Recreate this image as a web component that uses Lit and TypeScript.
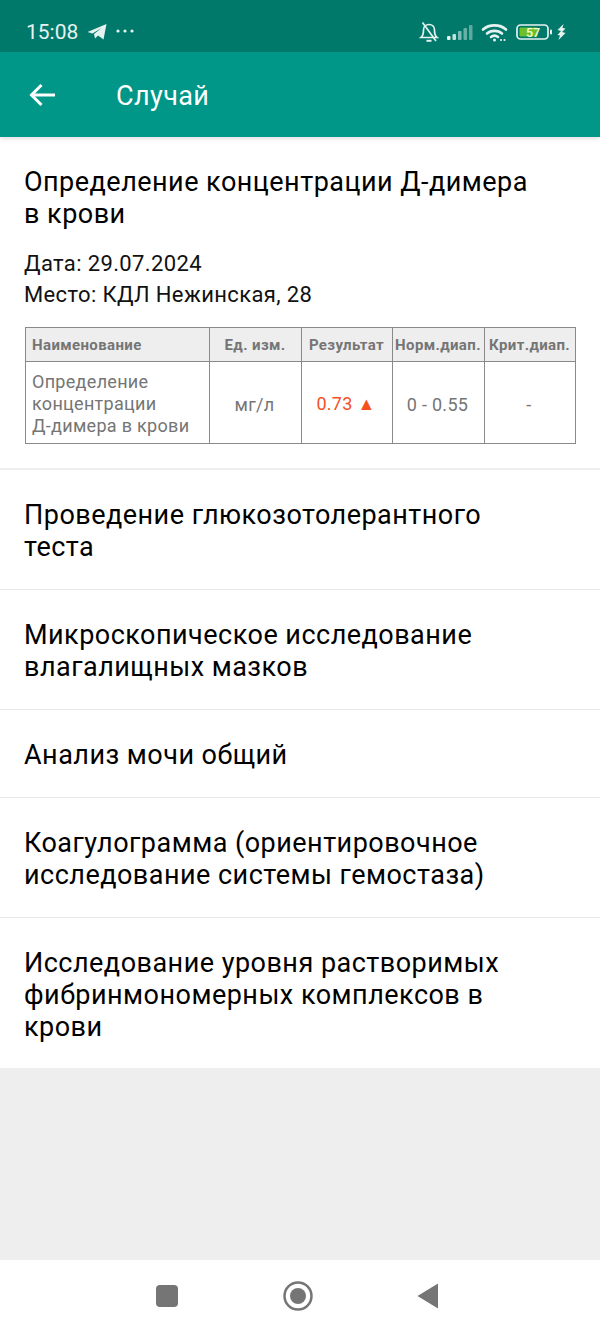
import { LitElement, html, css } from "lit";
import { customElement } from "lit/decorators.js";

const others = [
  "Проведение глюкозотолерантного теста",
  "Микроскопическое исследование влагалищных мазков",
  "Анализ мочи общий",
  "Коагулограмма (ориентировочное исследование системы гемостаза)",
  "Исследование уровня растворимых фибринмономерных комплексов в крови",
];

@customElement("app-root")
export class AppRoot extends LitElement {
  static styles = css`
    :host {
      display: flex;
      flex-direction: column;
      height: 1332px;
      background: #eeeeee;
      font-family: Roboto, "Noto Sans", sans-serif;
      color: #000;
    }
    .status {
      height: 52px;
      box-sizing: border-box;
      background: #00796b;
      color: #e6f2f0;
      display: flex;
      align-items: center;
      padding: 12px 34px 0 26px;
      flex: none;
    }
    .time {
      font-size: 21px;
      font-weight: 400;
      margin-right: 9px;
    }
    .status svg {
      display: block;
    }
    .tg {
      margin-right: 9px;
    }
    .dots {
      margin-top: -3px;
    }
    .status-right {
      margin-left: auto;
      display: flex;
      align-items: center;
      gap: 8px;
    }
    .bolt {
      margin-left: -3px;
    }
    .bar {
      height: 85px;
      background: #009688;
      color: #fff;
      display: flex;
      align-items: center;
      padding-left: 29px;
      flex: none;
      box-shadow: 0 2px 4px rgba(0, 0, 0, 0.12);
      position: relative;
    }
    .bar-title {
      font-size: 27px;
      letter-spacing: 0.4px;
      margin-left: 60px;
      padding-top: 2px;
    }
    .first {
      background: #fff;
      padding: 29px 25px 24px;
      border-bottom: 2px solid #eeeeee;
    }
    .name {
      font-size: 27px;
      line-height: 32px;
      letter-spacing: 0.48px;
      margin: 0 0 0 -1px;
      font-weight: 400;
      max-width: 510px;
    }
    .meta {
      margin: 18px 0 0 -1px;
      font-size: 22px;
      line-height: 31px;
      letter-spacing: 0.37px;
      color: #111;
    }
    table {
      margin-top: 17px;
      width: 551px;
      border-collapse: collapse;
      table-layout: fixed;
      color: #757575;
    }
    th,
    td {
      border: 1px solid #8a8a8a;
      text-align: center;
      padding: 0 2px 0 0;
    }
    th {
      background: #eeeeee;
      height: 33px;
      padding-right: 1px;
      font-size: 15px;
      font-weight: 700;
      letter-spacing: 0.38px;
      white-space: nowrap;
    }
    td {
      font-size: 18px;
      height: 78px;
      padding-top: 3px;
      letter-spacing: 0.3px;
    }
    th.left,
    td.left {
      text-align: left;
      padding-left: 6px;
      padding-right: 0;
      line-height: 22px;
    }
    .nb {
      white-space: nowrap;
    }
    .high {
      color: #f4511e;
    }
    .row {
      background: #fff;
      padding: 29px 25px 26px;
      border-bottom: 1px solid #e8e8e8;
    }
    .row:last-child {
      padding-bottom: 25px;
      border-bottom: none;
    }
    .fill {
      flex: 1;
    }
    .nav {
      height: 72px;
      background: #fff;
      display: flex;
      align-items: center;
      justify-content: center;
      flex: none;
    }
    .nav svg {
      display: block;
    }
    .nav-items {
      display: flex;
      align-items: center;
      gap: 104px;
      margin: 0 6px 1px 0;
    }
  `;

  render() {
    return html`
      <div class="status">
        <span class="time">15:08</span>
        <svg class="tg" width="20" height="18" viewBox="0 0 20 18">
          <path fill="#e6f2f0" d="M0.5 9 L19.5 1 L16.5 16.5 L11 12.5 L8 15.5 L7 11 L14.5 5 L5.5 10.5 Z" />
        </svg>
        <svg class="dots" width="18" height="4" viewBox="0 0 18 4">
          <circle cx="2" cy="2" r="1.6" fill="#e6f2f0" />
          <circle cx="9" cy="2" r="1.6" fill="#e6f2f0" />
          <circle cx="16" cy="2" r="1.6" fill="#e6f2f0" />
        </svg>
        <div class="status-right">
          <svg width="20" height="20" viewBox="0 0 20 20" fill="none" stroke="#e6f2f0" stroke-width="1.7">
            <path d="M2 15.5 C4.5 13.5 4.5 11 4.5 8 C4.5 4.5 7 2.5 10 2.5 C13 2.5 15.5 4.5 15.5 8 C15.5 11 15.5 13.5 18 15.5 Z" />
            <path d="M7.5 18.8 H12.5" stroke-width="2" />
            <path d="M3.5 0.5 L17 19" />
          </svg>
          <svg width="26" height="16" viewBox="0 0 26 16" fill="#e6f2f0">
            <rect x="0" y="12" width="3.5" height="4" rx="1" />
            <rect x="5.5" y="10" width="3.5" height="6" rx="1" opacity="0.85" />
            <rect x="11" y="7" width="3.5" height="9" rx="1" opacity="0.55" />
            <rect x="16.5" y="4" width="3.5" height="12" rx="1" opacity="0.45" />
            <rect x="22" y="1" width="3.5" height="15" rx="1" opacity="0.4" />
          </svg>
          <svg width="27" height="19" viewBox="0 0 27 19" fill="none" stroke="#e6f2f0" stroke-width="2.6" stroke-linecap="round">
            <path d="M2 6.5 C8 1 19 1 25 6.5" />
            <path d="M6 10.5 C10 7 17 7 21 10.5" />
            <path d="M10 14 C12 12.5 15 12.5 17 14" />
            <circle cx="13.5" cy="17" r="1.5" fill="#e6f2f0" stroke="none" />
            <circle cx="20" cy="17" r="1.1" fill="#e6f2f0" stroke="none" />
            <circle cx="23.5" cy="17" r="1.1" fill="#e6f2f0" stroke="none" />
          </svg>
          <svg width="36" height="16" viewBox="0 0 36 16">
            <rect x="1" y="1" width="31" height="14" rx="3.5" fill="none" stroke="#e6f2f0" stroke-width="1.7" />
            <rect x="3.5" y="3.5" width="18" height="9" rx="1" fill="#6fbf2a" />
            <rect x="34" y="5.5" width="2" height="5" rx="1" fill="#e6f2f0" />
            <text x="10" y="12.5" font-size="12.5" font-weight="500" fill="#f0ffd8" font-family="Roboto">57</text>
          </svg>
          <svg class="bolt" width="9" height="16" viewBox="0 0 9 16">
            <path fill="#e6f2f0" d="M6.5 0 L0.5 6 L4 7 L0.5 11 L3 11.5 L1.5 16 L8.5 9 L5 8 L8.5 4.5 L5.5 4 Z" />
          </svg>
        </div>
      </div>
      <div class="bar">
        <svg width="27" height="24" viewBox="0 0 27 24" fill="none" stroke="#fff" stroke-width="3">
          <path d="M26 12 H3" />
          <path d="M12.5 2 L2.5 12 L12.5 22" />
        </svg>
        <span class="bar-title">Случай</span>
      </div>
      <div class="first">
        <h2 class="name">Определение концентрации Д-димера в крови</h2>
        <div class="meta">Дата: 29.07.2024<br />Место: КДЛ Нежинская, 28</div>
        <table>
          <colgroup>
            <col style="width:184px" /><col style="width:92px" /><col style="width:91px" /><col style="width:92px" /><col style="width:91px" />
          </colgroup>
          <tr>
            <th class="left">Наименование</th>
            <th>Ед. изм.</th>
            <th>Результат</th>
            <th>Норм.диап.</th>
            <th>Крит.диап.</th>
          </tr>
          <tr>
            <td class="left">Определение концентрации <span class="nb">Д-димера</span> в крови</td>
            <td>мг/л</td>
            <td class="high">0.73 ▲</td>
            <td>0 - 0.55</td>
            <td>-</td>
          </tr>
        </table>
      </div>
      <div class="list">
        ${others.map((t) => html`<div class="row"><div class="name">${t}</div></div>`)}
      </div>
      <div class="fill"></div>
      <div class="nav">
        <div class="nav-items">
          <svg width="24" height="24" viewBox="0 0 24 24"><rect x="1" y="1" width="22" height="22" rx="4" fill="#757575" /></svg>
          <svg width="30" height="30" viewBox="0 0 30 30">
            <circle cx="15" cy="15" r="13.5" fill="none" stroke="#757575" stroke-width="2.5" />
            <circle cx="15" cy="15" r="8" fill="#757575" />
          </svg>
          <svg width="22" height="26" viewBox="0 0 22 26"><path d="M21 0.5 V25.5 L0.5 13 Z" fill="#757575" /></svg>
        </div>
      </div>
    `;
  }
}
